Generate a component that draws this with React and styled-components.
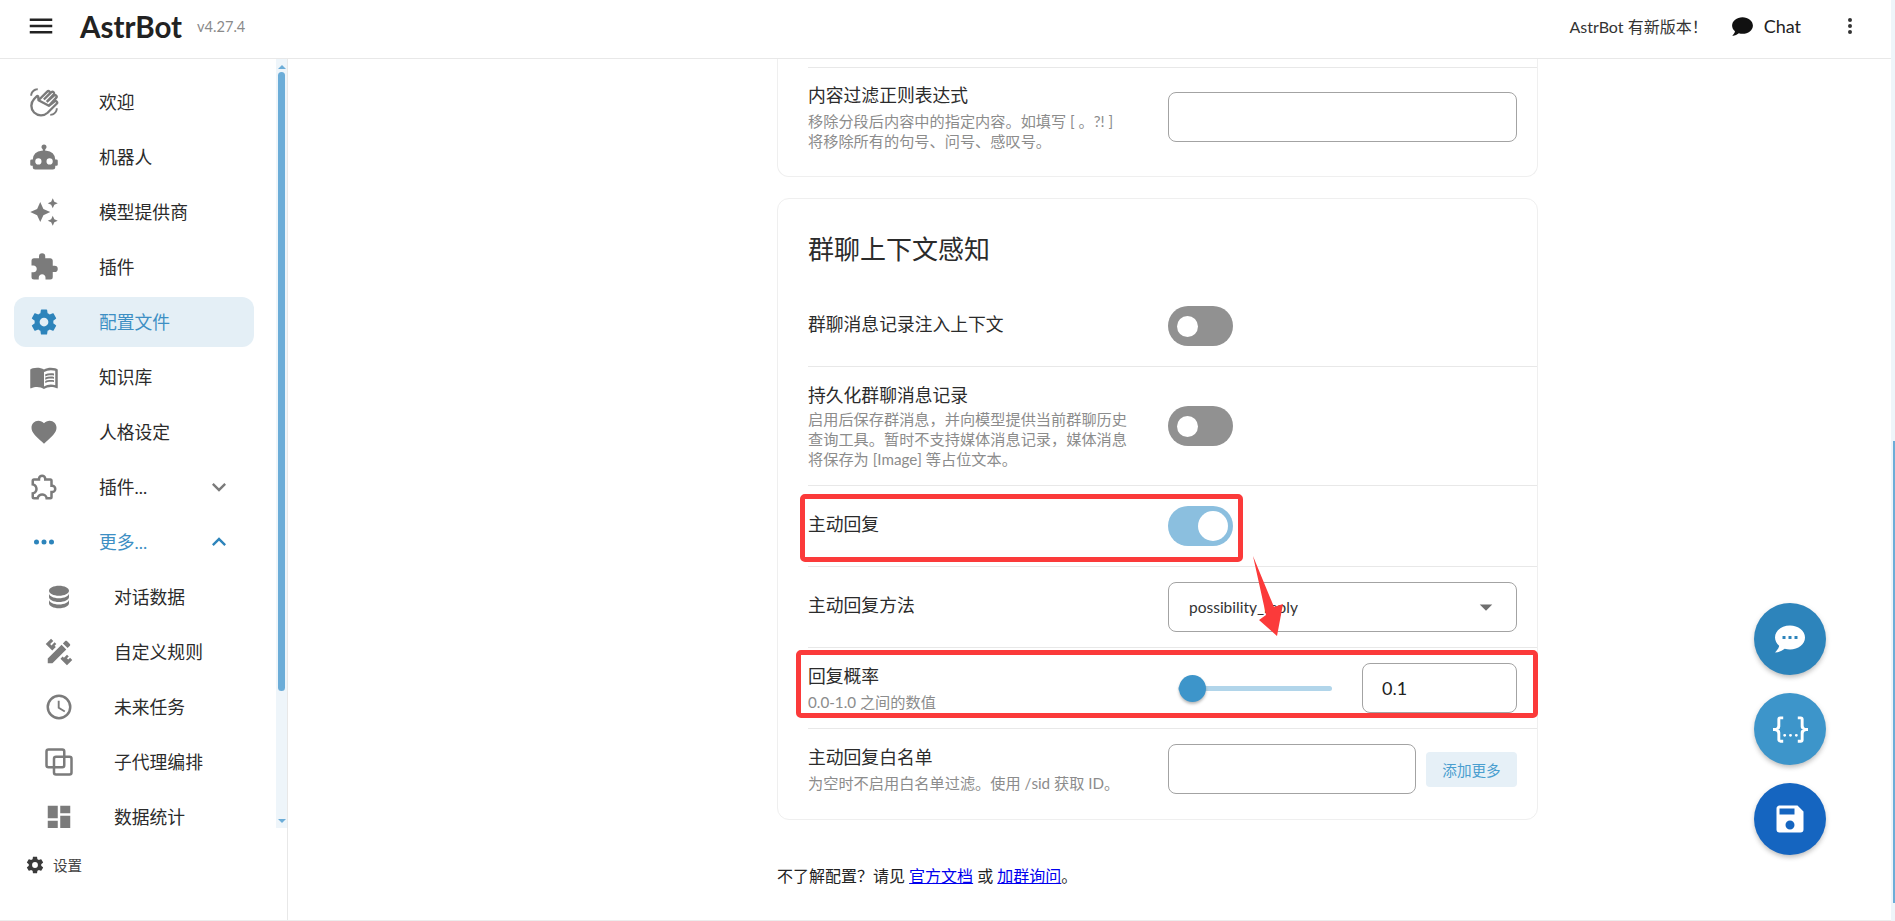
import React from "react";
import styled, { createGlobalStyle } from "styled-components";

const FONT = `Lato, "Noto Sans CJK SC", sans-serif`;

const MDI = {
  menu: "M3,6H21V8H3V6M3,11H21V13H3V11M3,16H21V18H3V16Z",
  robot:
    "M12,2A2,2 0 0,1 14,4C14,4.74 13.6,5.39 13,5.73V7H14A7,7 0 0,1 21,14H22A1,1 0 0,1 23,15V18A1,1 0 0,1 22,19H21V20A2,2 0 0,1 19,22H5A2,2 0 0,1 3,20V19H2A1,1 0 0,1 1,18V15A1,1 0 0,1 2,14H3A7,7 0 0,1 10,7H11V5.73C10.4,5.39 10,4.74 10,4A2,2 0 0,1 12,2M7.5,13A2.5,2.5 0 0,0 5,15.5A2.5,2.5 0 0,0 7.5,18A2.5,2.5 0 0,0 10,15.5A2.5,2.5 0 0,0 7.5,13M16.5,13A2.5,2.5 0 0,0 14,15.5A2.5,2.5 0 0,0 16.5,18A2.5,2.5 0 0,0 19,15.5A2.5,2.5 0 0,0 16.5,13Z",
  creation:
    "M19,1L17.74,3.75L15,5L17.74,6.26L19,9L20.25,6.26L23,5L20.25,3.75M9,4L6.5,9.5L1,12L6.5,14.5L9,20L11.5,14.5L17,12L11.5,9.5M19,15L17.74,17.74L15,19L17.74,20.25L19,23L20.25,20.25L23,19L20.25,17.74",
  puzzle:
    "M20.5,11H19V7C19,5.89 18.1,5 17,5H13V3.5A2.5,2.5 0 0,0 10.5,1A2.5,2.5 0 0,0 8,3.5V5H4A2,2 0 0,0 2,7V10.8H3.5C5,10.8 6.2,12 6.2,13.5C6.2,15 5,16.2 3.5,16.2H2V20A2,2 0 0,0 4,22H7.8V20.5C7.8,19 9,17.8 10.5,17.8C12,17.8 13.2,19 13.2,20.5V22H17A2,2 0 0,0 19,20V16H20.5A2.5,2.5 0 0,0 23,13.5A2.5,2.5 0 0,0 20.5,11Z",
  puzzleOutline:
    "M22,13.5C22,15.26 20.7,16.72 19,16.96V20A2,2 0 0,1 17,22H13.2V21.7A2.7,2.7 0 0,0 10.5,19C9,19 7.8,20.21 7.8,21.7V22H4A2,2 0 0,1 2,20V16.2H2.3C3.79,16.2 5,15 5,13.5C5,12 3.79,10.8 2.3,10.8H2V7A2,2 0 0,1 4,5H7.04C7.28,3.3 8.74,2 10.5,2C12.26,2 13.72,3.3 13.96,5H17A2,2 0 0,1 19,7V10.04C20.7,10.28 22,11.74 22,13.5M17,15H18.5A1.5,1.5 0 0,0 20,13.5A1.5,1.5 0 0,0 18.5,12H17V7H12V5.5A1.5,1.5 0 0,0 10.5,4A1.5,1.5 0 0,0 9,5.5V7H4V9.12C5.76,9.8 7,11.5 7,13.5C7,15.5 5.75,17.2 4,17.88V20H6.12C6.8,18.25 8.5,17 10.5,17C12.5,17 14.2,18.25 14.88,20H17V15Z",
  cog: "M12,15.5A3.5,3.5 0 0,1 8.5,12A3.5,3.5 0 0,1 12,8.5A3.5,3.5 0 0,1 15.5,12A3.5,3.5 0 0,1 12,15.5M19.43,12.97C19.47,12.65 19.5,12.33 19.5,12C19.5,11.67 19.47,11.34 19.43,11L21.54,9.37C21.73,9.22 21.78,8.95 21.66,8.73L19.66,5.27C19.54,5.05 19.27,4.96 19.05,5.05L16.56,6.05C16.04,5.66 15.5,5.32 14.87,5.07L14.5,2.42C14.46,2.18 14.25,2 14,2H10C9.75,2 9.54,2.18 9.5,2.42L9.13,5.07C8.5,5.32 7.96,5.66 7.44,6.05L4.95,5.05C4.73,4.96 4.46,5.05 4.34,5.27L2.34,8.73C2.21,8.95 2.27,9.22 2.46,9.37L4.57,11C4.53,11.34 4.5,11.67 4.5,12C4.5,12.33 4.53,12.65 4.57,12.97L2.46,14.63C2.27,14.78 2.21,15.05 2.34,15.27L4.34,18.73C4.46,18.95 4.73,19.03 4.95,18.94L7.44,17.94C7.96,18.34 8.5,18.68 9.13,18.93L9.5,21.58C9.54,21.82 9.75,22 10,22H14C14.25,22 14.46,21.82 14.5,21.58L14.87,18.93C15.5,18.67 16.04,18.34 16.56,17.94L19.05,18.95C19.27,19.03 19.54,18.95 19.66,18.73L21.66,15.27C21.78,15.05 21.73,14.78 21.54,14.63L19.43,12.97Z",
  book: "M12 21.5C10.65 20.65 8.2 20 6.5 20C4.85 20 3.15 20.3 1.75 21.05C1.65 21.1 1.6 21.1 1.5 21.1C1.25 21.1 1 20.85 1 20.6V6C1.6 5.55 2.25 5.25 3 5C4.11 4.65 5.33 4.5 6.5 4.5C8.45 4.5 10.55 4.9 12 6C13.45 4.9 15.55 4.5 17.5 4.5C18.67 4.5 19.89 4.65 21 5C21.75 5.25 22.4 5.55 23 6V20.6C23 20.85 22.75 21.1 22.5 21.1C22.4 21.1 22.35 21.1 22.25 21.05C20.85 20.3 19.15 20 17.5 20C15.8 20 13.35 20.65 12 21.5M12 8V19.5C13.35 18.65 15.8 18 17.5 18C18.7 18 19.9 18.15 21 18.5V7C19.9 6.65 18.7 6.5 17.5 6.5C15.8 6.5 13.35 7.15 12 8M13 11.5C14.11 10.82 15.6 10.5 17.5 10.5C18.41 10.5 19.2 10.59 20 10.78V9.23C19.13 9.08 18.29 9 17.5 9C15.73 9 14.23 9.28 13 9.84V11.5M17.5 11.67C15.79 11.67 14.29 11.93 13 12.46V14.15C14.11 13.5 15.6 13.16 17.5 13.16C18.54 13.16 19.38 13.24 20 13.4V11.9C19.13 11.74 18.29 11.67 17.5 11.67M20 14.57C19.13 14.41 18.29 14.33 17.5 14.33C15.67 14.33 14.17 14.6 13 15.13V16.82C14.11 16.16 15.6 15.83 17.5 15.83C18.54 15.83 19.38 15.91 20 16.07V14.57Z",
  heart:
    "M12,21.35L10.55,20.03C5.4,15.36 2,12.27 2,8.5C2,5.41 4.42,3 7.5,3C9.24,3 10.91,3.81 12,5.08C13.09,3.81 14.76,3 16.5,3C19.58,3 22,5.41 22,8.5C22,12.27 18.6,15.36 13.45,20.03L12,21.35Z",
  dotsH:
    "M16,12A2,2 0 0,1 18,10A2,2 0 0,1 20,12A2,2 0 0,1 18,14A2,2 0 0,1 16,12M10,12A2,2 0 0,1 12,10A2,2 0 0,1 14,12A2,2 0 0,1 12,14A2,2 0 0,1 10,12M4,12A2,2 0 0,1 6,10A2,2 0 0,1 8,12A2,2 0 0,1 6,14A2,2 0 0,1 4,12Z",
  dotsV:
    "M12,16A2,2 0 0,1 14,18A2,2 0 0,1 12,20A2,2 0 0,1 10,18A2,2 0 0,1 12,16M12,10A2,2 0 0,1 14,12A2,2 0 0,1 12,14A2,2 0 0,1 10,12A2,2 0 0,1 12,10M12,4A2,2 0 0,1 14,6A2,2 0 0,1 12,8A2,2 0 0,1 10,6A2,2 0 0,1 12,4Z",
  database:
    "M12,3C7.58,3 4,4.79 4,7C4,9.21 7.58,11 12,11C16.42,11 20,9.21 20,7C20,4.79 16.42,3 12,3M4,9V12C4,14.21 7.58,16 12,16C16.42,16 20,14.21 20,12V9C20,11.21 16.42,13 12,13C7.58,13 4,11.21 4,9M4,14V17C4,19.21 7.58,21 12,21C16.42,21 20,19.21 20,17V14C20,16.21 16.42,18 12,18C7.58,18 4,16.21 4,14Z",
  pencilRuler:
    "M3 17.25V21H6.75L17.81 9.93L14.06 6.18L3 17.25M22.61 18.36L18.36 22.61L13.16 17.41L14.93 15.64L15.93 16.64L18.4 14.16L19.82 15.58L18.36 17L19.42 18L20.84 16.6L22.61 18.36M6.61 10.83L1.39 5.64L5.64 1.39L7.4 3.16L4.93 5.64L6 6.7L8.46 4.22L9.88 5.64L8.46 7.05L9.46 8.05L6.61 10.83M20.71 7C21.1 6.61 21.1 6 20.71 5.59L18.37 3.29C18 2.9 17.35 2.9 16.96 3.29L15.12 5.12L18.87 8.87L20.71 7Z",
  clock:
    "M12,20A8,8 0 0,0 20,12A8,8 0 0,0 12,4A8,8 0 0,0 4,12A8,8 0 0,0 12,20M12,2A10,10 0 0,1 22,12A10,10 0 0,1 12,22C6.47,22 2,17.5 2,12A10,10 0 0,1 12,2M12.5,7V12.25L17,14.92L16.25,16.15L11,13V7H12.5Z",
  dashboard: "M13,3V9H21V3M13,21H21V11H13M3,21H11V15H3M3,13H11V3H3V13Z",
  chevronDown: "M7.41,8.58L12,13.17L16.59,8.58L18,10L12,16L6,10L7.41,8.58Z",
  chevronUp: "M7.41,15.41L12,10.83L16.59,15.41L18,14L12,8L6,14L7.41,15.41Z",
  chat: "M12,3C17.5,3 22,6.58 22,11C22,15.42 17.5,19 12,19C10.76,19 9.57,18.82 8.47,18.5C5.55,21 2,21 2,21C4.33,18.67 4.7,17.1 4.75,16.5C3.05,15.07 2,13.13 2,11C2,6.58 6.5,3 12,3Z",
  chatDots:
    "M12,3C6.5,3 2,6.58 2,11C2.05,13.15 3.06,15.17 4.75,16.5C4.75,17.1 4.33,18.67 2,21C4.37,20.89 6.64,20 8.47,18.5C9.61,18.83 10.81,19 12,19C17.5,19 22,15.42 22,11C22,6.58 17.5,3 12,3M17,12H15V10H17V12M13,12H11V10H13V12M9,12H7V10H9V12Z",
  codeJson:
    "M5,3H7V5H5V10A2,2 0 0,1 3,12A2,2 0 0,1 5,14V19H7V21H5C3.93,20.73 3,20.1 3,19V15A2,2 0 0,0 1,13H0V11H1A2,2 0 0,0 3,9V5A2,2 0 0,1 5,3M19,3A2,2 0 0,1 21,5V9A2,2 0 0,0 23,11H24V13H23A2,2 0 0,0 21,15V19A2,2 0 0,1 19,21H17V19H19V14A2,2 0 0,1 21,12A2,2 0 0,1 19,10V5H17V3H19M12,15A1,1 0 0,1 13,16A1,1 0 0,1 12,17A1,1 0 0,1 11,16A1,1 0 0,1 12,15M8,15A1,1 0 0,1 9,16A1,1 0 0,1 8,17A1,1 0 0,1 7,16A1,1 0 0,1 8,15M16,15A1,1 0 0,1 17,16A1,1 0 0,1 16,17A1,1 0 0,1 15,16A1,1 0 0,1 16,15Z",
  save: "M15,9H5V5H15M12,19A3,3 0 0,1 9,16A3,3 0 0,1 12,13A3,3 0 0,1 15,16A3,3 0 0,1 12,19M17,3H5C3.89,3 3,3.9 3,5V19A2,2 0 0,0 5,21H19A2,2 0 0,0 21,19V7L17,3Z",
  menuDown: "M7,10L12,15L17,10H7Z",
};

const GlobalStyle = createGlobalStyle`
  html, body {
    margin: 0;
    height: 100%;
    overflow: hidden;
    background: #fff;
    font-family: ${FONT};
  }
  * { box-sizing: border-box; }
`;

const Shell = styled.div`
  display: flex;
  height: 921px;
  color: #2b2b2b;
`;

const Page = styled.div`
  flex: 1;
  min-width: 0;
  display: flex;
  flex-direction: column;
  border-bottom: 1px solid #ececec;
`;

const PageScroll = styled.div`
  position: relative;
  width: 4px;
  background: #eef5fa;
`;

const PageThumb = styled.div`
  position: absolute;
  right: 0;
  top: 441px;
  height: 462px;
  width: 2px;
  background: #6cadd8;
`;

const Header = styled.header`
  height: 59px;
  flex: none;
  display: flex;
  align-items: center;
  padding: 0 29px 6px 26px;
  background: #fff;
  border-bottom: 1px solid #e8e8e8;
`;

const Glyph = styled.svg`
  display: block;
  flex: none;
  width: ${(p) => p.$size || 30}px;
  height: ${(p) => p.$size || 30}px;
  fill: ${(p) => p.$color || "#7b7b7b"};
`;

const Icon = ({ name, size, color }) => (
  <Glyph viewBox="0 0 24 24" $size={size} $color={color}>
    <path d={MDI[name]} />
  </Glyph>
);

const HandIcon = () => (
  <Glyph viewBox="0 0 24 24">
    <path d="M23 17C23 20.31 20.31 23 17 23V21.5C19.5 21.5 21.5 19.5 21.5 17H23M1 7C1 3.69 3.69 1 7 1V2.5C4.5 2.5 2.5 4.5 2.5 7H1Z" />
    <path
      fill="none"
      stroke="#7b7b7b"
      strokeWidth="1.9"
      strokeLinejoin="round"
      d="M7.6 10.6L14.6 3.7C15.1 3.2 15.9 3.2 16.4 3.7C16.9 4.2 16.9 5 16.4 5.5L11.9 10M11.9 10L17.9 4.2C18.4 3.7 19.2 3.7 19.7 4.2C20.2 4.7 20.2 5.5 19.7 6L14.2 11.9M14.2 11.9L19.9 6.9C20.4 6.4 21.2 6.4 21.7 6.9C22.2 7.4 22.2 8.2 21.7 8.7L15.9 15M15.9 15L20.3 11.6C20.8 11.1 21.6 11.1 22.1 11.6C22.6 12.1 22.6 12.9 22.1 13.4L14.9 20.6C11.9 23.4 7.2 23.4 4.1 20.4C1.1 17.3 1.2 12.6 4.1 9.6L6.2 7.4C6.7 6.9 7.4 7.3 7.4 8L7.6 10.6Z"
    />
  </Glyph>
);

const AgentIcon = () => (
  <Glyph viewBox="0 0 24 24">
    <path
      fill="none"
      stroke="#7b7b7b"
      strokeWidth="2"
      d="M8 16.2H3.6C2.5 16.2 2 15.7 2 14.6V3.6C2 2.5 2.5 2 3.6 2H14.6C15.7 2 16.2 2.5 16.2 3.6V7.8M8 16.2V9.4C8 8.3 8.5 7.8 9.6 7.8H20.4C21.5 7.8 22 8.3 22 9.4V20.4C22 21.5 21.5 22 20.4 22H9.6C8.5 22 8 21.5 8 20.4V16.2M16.2 7.8V14.6C16.2 15.7 15.7 16.2 14.6 16.2H8"
    />
  </Glyph>
);

const Logo = styled.span`
  margin-left: 24px;
  font-size: 29.5px;
  font-weight: 700;
  color: #222;
`;

const Version = styled.span`
  margin-left: 15px;
  font-size: 14.6px;
  color: #8a8a8a;
`;

const Notice = styled.span`
  margin-left: auto;
  font-size: 16px;
  color: #333;
`;

const ChatLink = styled.span`
  display: flex;
  align-items: center;
  gap: 9px;
  margin-left: 22px;
  font-size: 18px;
  color: #222;
`;

const MoreDots = styled.span`
  margin-left: 37px;
`;

const Body = styled.div`
  flex: 1;
  min-height: 0;
  display: flex;
`;

const Sidebar = styled.aside`
  width: 288px;
  flex: none;
  display: flex;
  flex-direction: column;
  border-right: 1px solid #e8e8e8;
`;

const NavArea = styled.div`
  height: 769px;
  flex: none;
  display: flex;
  overflow: hidden;
`;

const NavList = styled.nav`
  flex: 1;
  padding: 18px 0 0 14px;
  display: flex;
  flex-direction: column;
  gap: 5px;
`;

const NavItem = styled.div`
  flex: none;
  width: 240px;
  height: 50px;
  display: flex;
  align-items: center;
  gap: 40px;
  padding: 0 21px 0 ${(p) => (p.$sub ? 30 : 15)}px;
  border-radius: 12px;
  font-size: 17.8px;
  color: ${(p) => (p.$active || p.$open ? "#3d8fc4" : "#2b2b2b")};
  background: ${(p) => (p.$active ? "#e4eff6" : "transparent")};
`;

const NavText = styled.span`
  padding-bottom: 2px;
`;

const Chevron = styled.span`
  margin-left: auto;
`;

const NavScroll = styled.div`
  width: 11px;
  flex: none;
  display: flex;
  flex-direction: column;
  align-items: center;
  background: #eef5fa;
`;

const ScrollArrow = styled.div`
  flex: none;
  width: 0;
  height: 0;
  margin: ${(p) => (p.$down ? "128px 0 0" : "6px 0 0")};
  border-left: 4px solid transparent;
  border-right: 4px solid transparent;
  border-bottom: ${(p) => (p.$down ? "0" : "4px solid #6cadd8")};
  border-top: ${(p) => (p.$down ? "4px solid #6cadd8" : "0")};
`;

const ScrollThumb = styled.div`
  flex: none;
  width: 7px;
  height: 619px;
  margin-top: 3px;
  border-radius: 4px;
  background: #6cadd8;
`;

const SettingsLink = styled.div`
  display: flex;
  align-items: center;
  gap: 8px;
  padding: 26px 0 0 25px;
  font-size: 14.6px;
  color: #444;
`;

const Main = styled.main`
  flex: 1;
  min-width: 0;
  overflow: hidden;
  padding-left: 489px;
  background: #fff;
`;

const Card = styled.section`
  position: relative;
  width: 761px;
  padding-bottom: 10px;
  background: #fff;
  border: 1px solid #efefef;
  border-radius: 12px;
  margin-top: 21px;
`;

const ScrolledCard = styled(Card)`
  margin-top: 0;
  padding-top: 8px;
  border-top: 0;
  border-radius: 0 0 12px 12px;
`;

const CardTitle = styled.h2`
  margin: 0;
  height: 87px;
  padding: 30px 0 0 30px;
  font-size: 26px;
  line-height: 40px;
  font-weight: 400;
  color: #2b2b2b;
`;

const Row = styled.div`
  position: relative;
  margin-left: 30px;
  min-height: ${(p) => p.$height}px;
  display: flex;
  align-items: center;
  padding-right: 20px;
  border-top: ${(p) => (p.$plain ? "0" : "1px solid #e8e8e8")};
`;

const Info = styled.div`
  width: 360px;
  flex: none;
`;

const SoloInfo = styled(Info)`
  padding-bottom: 4px;
`;

const Label = styled.div`
  font-size: 17.8px;
  line-height: 24px;
  color: #2b2b2b;
`;

const Desc = styled.div`
  margin-top: ${(p) => p.$gap ?? 4}px;
  font-size: 15.2px;
  line-height: 20px;
  white-space: nowrap;
  color: #8c8c8c;
`;

const Control = styled.div`
  flex: 1;
  min-width: 0;
  display: flex;
  align-items: center;
`;

const TextInput = styled.input`
  flex: 1;
  min-width: 0;
  height: 50px;
  padding: 0 16px;
  border: 1px solid #a3a3a3;
  border-radius: 8px;
  outline: none;
  background: #fff;
  font: 18px ${FONT};
  color: #222;
`;

const NumberInput = styled(TextInput)`
  flex: none;
  width: 155px;
  padding-left: 19px;
`;

const SelectBox = styled.div`
  flex: 1;
  height: 50px;
  display: flex;
  align-items: center;
  justify-content: space-between;
  padding: 0 15px 0 20px;
  border: 1px solid #a3a3a3;
  border-radius: 8px;
  font-size: 15.5px;
  color: #333;
`;

const Toggle = styled.div`
  width: 65px;
  height: 40px;
  display: flex;
  align-items: center;
  justify-content: ${(p) => (p.$on ? "flex-end" : "flex-start")};
  padding: 0 ${(p) => (p.$on ? 5 : 9)}px;
  border-radius: 20px;
  background: ${(p) => (p.$on ? "#8bbfdf" : "#919191")};
`;

const Knob = styled.span`
  width: ${(p) => (p.$on ? 30 : 21)}px;
  height: ${(p) => (p.$on ? 30 : 21)}px;
  border-radius: 50%;
  background: #fff;
`;

const SliderTrack = styled.div`
  position: relative;
  width: 154px;
  height: 5px;
  margin: 0 30px 0 10px;
  border-radius: 3px;
  background: #b1d5ea;
`;

const SliderThumb = styled.span`
  position: absolute;
  left: 1px;
  top: -11px;
  width: 27px;
  height: 27px;
  border-radius: 50%;
  background: #3d95ca;
  box-shadow: 0 2px 3px rgba(0, 0, 0, 0.28);
`;

const AddButton = styled.button`
  flex: none;
  width: 91px;
  height: 35px;
  margin-left: 10px;
  border: 0;
  border-radius: 4px;
  background: #e6f0f7;
  font: 14.6px ${FONT};
  color: #4a9ecf;
`;

const RedFrame = styled.div`
  position: absolute;
  top: ${(p) => p.$top}px;
  left: ${(p) => p.$left}px;
  width: ${(p) => p.$width}px;
  height: 68px;
  border: 5px solid #fb3a3a;
  border-radius: 5px;
  pointer-events: none;
`;

const ArrowMark = styled.svg`
  position: absolute;
  left: 472px;
  top: 355px;
  width: 36px;
  height: 85px;
  fill: #fb3a3a;
`;

const FootNote = styled.p`
  margin: 45px 0 0;
  font-size: 16px;
  line-height: 22px;
  white-space: nowrap;
  color: #222;
  a {
    color: #0000ee;
  }
`;

const FabStack = styled.div`
  position: absolute;
  right: 69px;
  top: 603px;
  display: flex;
  flex-direction: column;
  gap: 18px;
`;

const Fab = styled.button`
  width: 72px;
  height: 72px;
  display: flex;
  align-items: center;
  justify-content: center;
  padding: 0;
  border: 0;
  border-radius: 50%;
  background: ${(p) => p.$bg};
  box-shadow: 0 3px 5px -1px rgba(0, 0, 0, 0.2), 0 2px 6px rgba(0, 0, 0, 0.1);
`;

const NAV = [
  { text: "欢迎", custom: <HandIcon /> },
  { text: "机器人", icon: "robot" },
  { text: "模型提供商", icon: "creation" },
  { text: "插件", icon: "puzzle" },
  { text: "配置文件", icon: "cog", active: true },
  { text: "知识库", icon: "book" },
  { text: "人格设定", icon: "heart" },
  { text: "插件...", icon: "puzzleOutline", chevron: "chevronDown" },
  { text: "更多...", icon: "dotsH", chevron: "chevronUp", open: true },
  { text: "对话数据", icon: "database", sub: true },
  { text: "自定义规则", icon: "pencilRuler", sub: true },
  { text: "未来任务", icon: "clock", sub: true },
  { text: "子代理编排", custom: <AgentIcon />, sub: true },
  { text: "数据统计", icon: "dashboard", sub: true },
];

export default function App() {
  return (
    <Shell>
      <GlobalStyle />
      <Page>
        <Header>
          <Icon name="menu" color="#222" />
          <Logo>AstrBot</Logo>
          <Version>v4.27.4</Version>
          <Notice>AstrBot 有新版本！</Notice>
          <ChatLink>
            <Icon name="chat" size={25} color="#111" />
            Chat
          </ChatLink>
          <MoreDots>
            <Icon name="dotsV" size={24} color="#333" />
          </MoreDots>
        </Header>
        <Body>
          <Sidebar>
            <NavArea>
              <NavList>
                {NAV.map((item) => (
                  <NavItem
                    key={item.text}
                    $active={item.active}
                    $open={item.open}
                    $sub={item.sub}
                  >
                    {item.custom || (
                      <Icon
                        name={item.icon}
                        color={item.active || item.open ? "#2d84bb" : "#7b7b7b"}
                      />
                    )}
                    <NavText>{item.text}</NavText>
                    {item.chevron && (
                      <Chevron>
                        <Icon
                          name={item.chevron}
                          size={28}
                          color={item.open ? "#2d84bb" : "#7b7b7b"}
                        />
                      </Chevron>
                    )}
                  </NavItem>
                ))}
              </NavList>
              <NavScroll>
                <ScrollArrow />
                <ScrollThumb />
                <ScrollArrow $down />
              </NavScroll>
            </NavArea>
            <SettingsLink>
              <Icon name="cog" size={20} color="#3a3a3a" />
              设置
            </SettingsLink>
          </Sidebar>
          <Main>
            <ScrolledCard>
              <Row $height={99}>
                <Info>
                  <Label>内容过滤正则表达式</Label>
                  <Desc>
                    移除分段后内容中的指定内容。如填写 [ 。?! ]
                    <br />
                    将移除所有的句号、问号、感叹号。
                  </Desc>
                </Info>
                <Control>
                  <TextInput readOnly />
                </Control>
              </Row>
            </ScrolledCard>
            <Card>
              <CardTitle>群聊上下文感知</CardTitle>
              <Row $height={80} $plain>
                <SoloInfo>
                  <Label>群聊消息记录注入上下文</Label>
                </SoloInfo>
                <Toggle>
                  <Knob />
                </Toggle>
              </Row>
              <Row $height={119}>
                <Info>
                  <Label>持久化群聊消息记录</Label>
                  <Desc $gap={2}>
                    启用后保存群消息，并向模型提供当前群聊历史
                    <br />
                    查询工具。暂时不支持媒体消息记录，媒体消息
                    <br />
                    将保存为 [Image] 等占位文本。
                  </Desc>
                </Info>
                <Toggle>
                  <Knob />
                </Toggle>
              </Row>
              <Row $height={81}>
                <SoloInfo>
                  <Label>主动回复</Label>
                </SoloInfo>
                <Toggle $on>
                  <Knob $on />
                </Toggle>
                <RedFrame $top={8} $left={-8} $width={443} />
              </Row>
              <Row $height={81}>
                <SoloInfo>
                  <Label>主动回复方法</Label>
                </SoloInfo>
                <Control>
                  <SelectBox>
                    possibility_reply
                    <Icon name="menuDown" size={30} color="#6f6f6f" />
                  </SelectBox>
                </Control>
              </Row>
              <Row $height={81}>
                <Info>
                  <Label>回复概率</Label>
                  <Desc>0.0-1.0 之间的数值</Desc>
                </Info>
                <Control>
                  <SliderTrack>
                    <SliderThumb />
                  </SliderTrack>
                  <NumberInput readOnly value="0.1" />
                </Control>
                <RedFrame $top={2} $left={-12} $width={742} />
              </Row>
              <Row $height={81}>
                <Info>
                  <Label>主动回复白名单</Label>
                  <Desc>为空时不启用白名单过滤。使用 /sid 获取 ID。</Desc>
                </Info>
                <Control>
                  <TextInput readOnly />
                  <AddButton>添加更多</AddButton>
                </Control>
              </Row>
              <ArrowMark viewBox="0 0 36 85">
                <polygon points="3,2 24,53 33,50 27,82 9,66 16,61" />
              </ArrowMark>
            </Card>
            <FootNote>
              不了解配置？请见 <a href="#docs">官方文档</a> 或{" "}
              <a href="#group">加群询问</a>。
            </FootNote>
          </Main>
        </Body>
        <FabStack>
          <Fab $bg="#2d84bb">
            <Icon name="chatDots" size={36} color="#fff" />
          </Fab>
          <Fab $bg="#3d95ca">
            <Icon name="codeJson" size={35} color="#fff" />
          </Fab>
          <Fab $bg="#1565c0">
            <Icon name="save" size={36} color="#fff" />
          </Fab>
        </FabStack>
      </Page>
      <PageScroll>
        <PageThumb />
      </PageScroll>
    </Shell>
  );
}
